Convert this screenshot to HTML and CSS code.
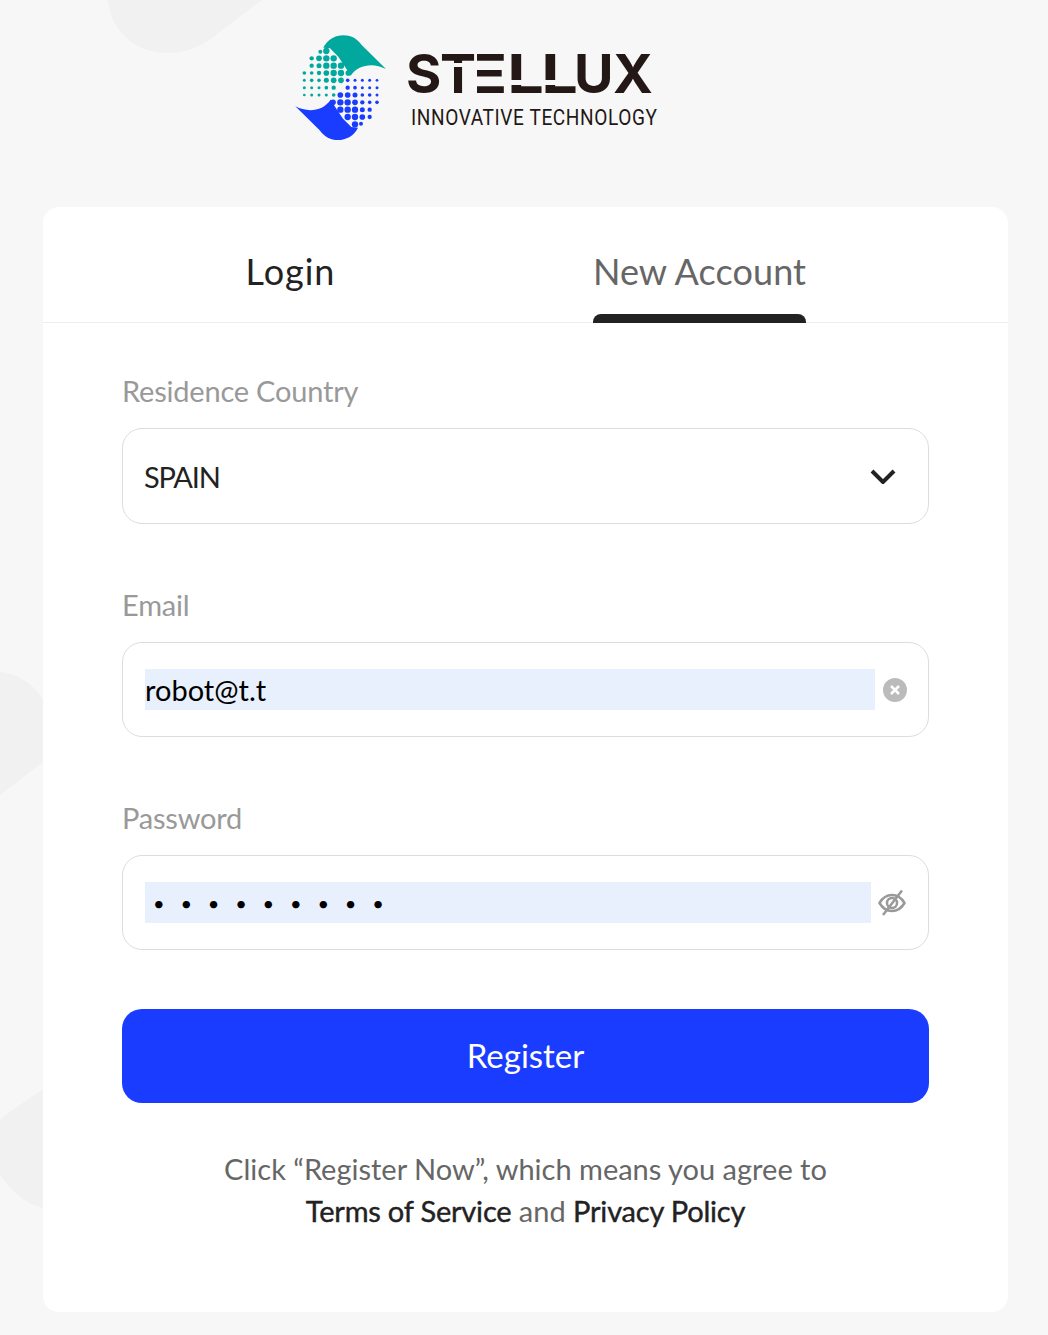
FILE: index.html
```html
<!DOCTYPE html>
<html lang="en">
<head>
<meta charset="utf-8">
<title>Stellux - Register</title>
<link rel="stylesheet" href="styles.css">
</head>
<body>
<svg class="blobs" viewBox="0 0 1048 1335" aria-hidden="true">
  <path d="M108 0C110 30 135 53 167 53C185 53 200 47 212 38L262 0Z"/>
  <path d="M0 672C20 674 35 686 43 700V762L0 795Z"/>
  <path d="M43 1089L8 1113C-4 1122 -4 1125 0 1175C10 1190 25 1204 43 1208Z"/>
</svg>
<header class="brand">
  <svg class="mark" viewBox="0 0 360 375" aria-hidden="true">
    <defs>
      <g id="half">
        <path d="M130 68C150 25 215 15 245 60L318 132C280 112 235 118 212 152L195 125L175 95L150 70Z"/>
        <circle cx="121" cy="80" r="6"/><circle cx="139" cy="78" r="9.500"/>
        <circle cx="95" cy="100" r="6.500"/><circle cx="117" cy="100" r="8.500"/><circle cx="139" cy="100" r="9.500"/><circle cx="161" cy="100" r="9.500"/>
        <circle cx="95" cy="122" r="6.500"/><circle cx="117" cy="122" r="7.500"/><circle cx="139" cy="122" r="9.500"/><circle cx="161" cy="122" r="9.500"/><circle cx="183" cy="122" r="9.500"/>
        <circle cx="73" cy="144" r="5.500"/><circle cx="95" cy="144" r="5.500"/><circle cx="117" cy="144" r="6.500"/><circle cx="139" cy="144" r="8.500"/><circle cx="161" cy="144" r="9.500"/><circle cx="183" cy="144" r="9.500"/><circle cx="205" cy="144" r="8.500"/>
        <circle cx="73" cy="166" r="4.500"/><circle cx="95" cy="166" r="5.500"/><circle cx="117" cy="166" r="5.500"/><circle cx="139" cy="166" r="7.500"/><circle cx="161" cy="166" r="8.500"/><circle cx="183" cy="166" r="8.500"/>
        <circle cx="73" cy="188" r="4.500"/><circle cx="95" cy="188" r="4.500"/><circle cx="117" cy="188" r="4.500"/><circle cx="139" cy="188" r="5.500"/><circle cx="161" cy="188" r="6.500"/>
        <circle cx="73" cy="210" r="4"/><circle cx="95" cy="210" r="4.500"/><circle cx="117" cy="210" r="4.500"/><circle cx="139" cy="210" r="4.500"/><circle cx="161" cy="210" r="5.500"/>
      </g>
    </defs>
    <use href="#half" class="teal"/>
    <use href="#half" class="blue" transform="rotate(180 182 188)"/>
  </svg>
  <div class="wordmark">
    <div class="name"><span class="ch ch-s">S</span><span class="ch ch-t">T</span><span class="ch ch-e">E</span><span class="ch ch-l">L</span><span class="ch ch-l ch-l2">L</span><span class="ch ch-u">U</span><span class="ch ch-x">X</span></div>
    <div class="tagline">INNOVATIVE TECHNOLOGY</div>
  </div>
</header>
<main class="card">
  <nav class="tabs">
    <a class="tab tab-login">Login</a>
    <a class="tab tab-new">New Account</a>
  </nav>
  <form class="form">
    <label class="field">
      <span class="label">Residence Country</span>
      <span class="box box-select">
        <span class="value">SPAIN</span>
        <svg class="chevron" viewBox="0 0 26 16" aria-hidden="true"><path d="M2 3L13 14L24 3"/></svg>
      </span>
    </label>
    <label class="field">
      <span class="label">Email</span>
      <span class="box">
        <input class="input" type="text" value="robot@t.t">
        <svg class="clear" viewBox="0 0 24 24" aria-hidden="true"><circle cx="12" cy="12" r="12"/><path d="M8 8L16 16M16 8L8 16"/></svg>
      </span>
    </label>
    <label class="field">
      <span class="label">Password</span>
      <span class="box">
        <input class="input input-pass" type="text" value="•••••••••">
        <svg class="eye" viewBox="0 0 28 26" aria-hidden="true"><path d="M1.500 13C5 7 9 5 14 5S23 7 26.500 13C23 19 19 21 14 21S5 19 1.500 13Z"/><circle cx="14" cy="13" r="5"/><path d="M24 0.500L5 25"/></svg>
      </span>
    </label>
    <button class="submit" type="button">Register</button>
    <p class="terms">Click “Register Now”, which means you agree to<br><strong>Terms of Service</strong> and <strong>Privacy Policy</strong></p>
  </form>
</main>
</body>
</html>
```
FILE: styles.css
```css
* { box-sizing: border-box; }
html, body { margin: 0; }
body {
  position: relative;
  width: 1048px;
  height: 1335px;
  overflow: hidden;
  background: #f7f7f7;
  font-family: "Lato", "Noto Sans", sans-serif;
  color: #222;
}
.blobs { position: absolute; inset: 0; width: 1048px; height: 1335px; fill: #f1f1f1; }
.brand {
  position: relative;
  display: flex;
  height: 207px;
  padding-left: 280px;
  padding-top: 25px;
}
.mark { width: 120px; height: 125px; flex: none; }
.teal { fill: #00a89d; }
.blue { fill: #1a3cff; }
.wordmark { margin-left: 6px; padding-top: 21px; }
.name {
  display: flex;
  font-family: "Inter", sans-serif;
  font-weight: 700;
  font-size: 54px;
  line-height: 56px;
  color: #231815;
}
.ch { display: block; flex: none; }
.ch-s { width: 34px; }
.ch-t { width: 33px; clip-path: path("M0 0H40V17H0Z M0 21H40V60H0Z"); }
.ch-e {
  width: 35px;
  clip-path: inset(0 0 0 12px);
  transform: translateX(-8px) scaleX(1.5);
  transform-origin: 12px 50%;
}
.ch-l {
  width: 34px;
  clip-path: path("M0 0H40V34H0Z M0 39H40V60H0Z");
  transform: scaleX(1.2);
  transform-origin: 4px 50%;
}
.ch-l2 { width: 32px; }
.ch-u { width: 39px; }
.ch-x { width: 37px; }
.tagline {
  margin-top: 3px;
  margin-left: 5px;
  font-family: "Roboto", sans-serif;
  font-weight: 400;
  font-size: 22px;
  line-height: 26px;
  letter-spacing: 0.7px;
  color: #231815;
  white-space: nowrap;
  transform: scaleX(0.866);
  transform-origin: left center;
}
.card {
  position: relative;
  width: 965px;
  height: 1105px;
  margin-left: 43px;
  background: #fff;
  border-radius: 16px;
}
.tabs {
  display: grid;
  grid-template-columns: 409px 409px;
  height: 116px;
  padding-left: 43px;
  border-bottom: 1px solid #eee;
}
.tab {
  position: relative;
  justify-self: center;
  padding-top: 40px;
  font-size: 36px;
  line-height: 48px;
}
.tab-login { color: #222; letter-spacing: 1px; }
.tab-new { color: #666; letter-spacing: 0.1px; }
.tab-new::after {
  content: "";
  position: absolute;
  left: 0;
  right: 0;
  bottom: -1px;
  height: 9px;
  background: #222;
  border-radius: 8px 8px 0 0;
}
.form { padding: 0 79px; }
.field { display: block; padding-top: 50px; }
.field + .field { padding-top: 63px; }
.label { display: block; font-size: 29px; line-height: 36px; letter-spacing: -0.2px; color: #999; }
.box {
  display: flex;
  align-items: center;
  justify-content: space-between;
  height: 95px;
  margin-top: 19px;
  padding: 0 22px;
  border: 1px solid #ddd;
  border-radius: 20px;
}
.box-select { height: 96px; padding-right: 32px; padding-left: 21px; }
.value { font-size: 29px; letter-spacing: -1.2px; color: #222; }
.chevron { width: 26px; height: 16px; fill: none; stroke: #222; stroke-width: 4; }
.input {
  width: 730px;
  height: 41px;
  padding: 0;
  border: 0;
  outline: 0;
  background: #e8f0fe;
  font: 400 29px "Lato", sans-serif;
  color: #000;
}
.input-pass { width: 726px; padding-left: 8px; font-size: 20px; letter-spacing: 15.800px; }
.clear { width: 24px; height: 24px; margin-right: -1px; fill: #bbb; stroke: #fff; stroke-width: 2.500; }
.clear circle { stroke: none; }
.eye { width: 28px; height: 26px; fill: none; stroke: #999; stroke-width: 2.500; }
.submit {
  display: block;
  width: 100%;
  height: 94px;
  margin-top: 59px;
  padding: 0 0 2px;
  border: 0;
  border-radius: 20px;
  background: #1a3cff;
  color: #fff;
  font: 400 33px "Lato", sans-serif;
}
.terms {
  margin: 45px 0 0;
  text-align: center;
  font-size: 29px;
  line-height: 42px;
  color: #666;
}
.terms strong { font-weight: 400; letter-spacing: -0.2px; color: #222; -webkit-text-stroke: 0.4px #222; }
```
